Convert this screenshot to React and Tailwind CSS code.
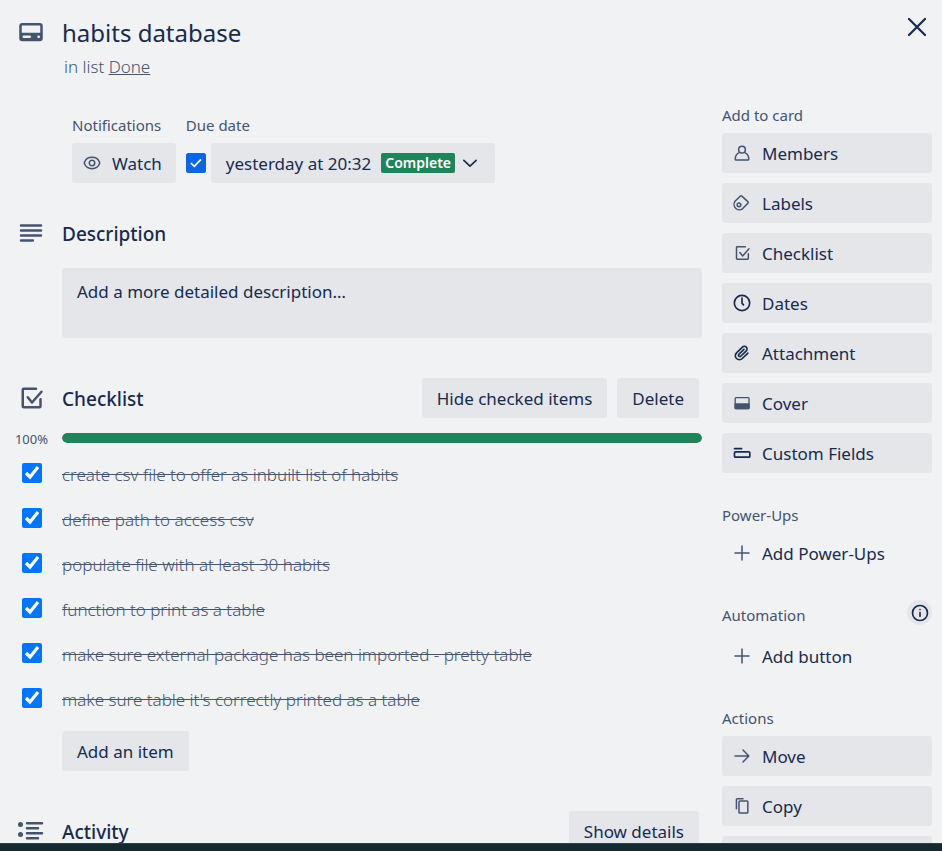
import React, { useState } from "react";

function Icon({ size = "size-5", sw = 2, children, className = "text-[#44546f]" }) {
  return (
    <svg
      viewBox="0 0 24 24"
      className={`${size} ${className} shrink-0`}
      fill="none"
      stroke="currentColor"
      strokeWidth={sw}
      strokeLinecap="round"
      strokeLinejoin="round"
      aria-hidden="true"
    >
      {children}
    </svg>
  );
}

const DARK = "text-[#172b4d]";

const checklistShape = (
  <>
    <path d="M16 4.6H6.2a.8.8 0 0 0-.8.8v13.2c0 .4.4.8.8.8h12.6c.4 0 .8-.4.8-.8V13" />
    <path d="M9.4 11.4l3.4 4.2L20.4 7" />
  </>
);

const icons = {
  members: (
    <Icon sw={1.8}>
      <circle cx="12" cy="8" r="4" />
      <path d="M9.2 11.2C6 12.4 3.9 15.6 3.9 19.5c0 .6.4 1 1 1h14.2c.6 0 1-.4 1-1 0-3.9-2.1-7.1-5.3-8.3" />
    </Icon>
  ),
  labels: (
    <Icon sw={1.8}>
      <path d="M3.9 9.7L9.8 3.8a1.4 1.4 0 0 1 2 0L19 10.4a1.2 1.2 0 0 1 0 1.8L12.9 18.7A6.4 6.4 0 0 1 3.9 9.7z" />
      <circle cx="8.4" cy="14.2" r="2.2" />
    </Icon>
  ),
  checklist: <Icon sw={1.8}>{checklistShape}</Icon>,
  dates: (
    <Icon className={DARK}>
      <circle cx="12" cy="12" r="9.2" />
      <path d="M12 6.2V12.2l1.8 2" />
    </Icon>
  ),
  attachment: (
    <Icon className={DARK} sw={0}>
      <path
        fill="currentColor"
        d="M11.6426 17.9647C10.1123 19.46 7.62736 19.4606 6.10092 17.9691C4.57505 16.478 4.57769 14.0467 6.10253 12.5566L13.2505 5.57184C14.1476 4.6952 15.5861 4.69251 16.4832 5.56921C17.3763 6.44184 17.3778 7.85135 16.4869 8.72199L9.78361 15.2722C9.53288 15.5172 9.12807 15.5163 8.86954 15.2636C8.61073 15.0107 8.60963 14.6158 8.86954 14.3618L15.0989 8.27463C15.4812 7.90109 15.4812 7.29546 15.0989 6.92192C14.7167 6.54838 14.0969 6.54838 13.7146 6.92192L7.48523 13.0091C6.45911 14.0118 6.46356 15.618 7.48523 16.6163C8.50674 17.6145 10.1511 17.6186 11.1679 16.6249L17.8712 10.0747C19.5274 8.45632 19.5244 5.83555 17.8676 4.2165C16.2047 2.59156 13.5266 2.59657 11.8662 4.21913L4.71822 11.2039C2.42951 13.4404 2.42555 17.083 4.71661 19.3218C7.00774 21.5606 10.7323 21.5597 13.0269 19.3174L19.7133 12.7837C20.0956 12.4101 20.0956 11.8045 19.7133 11.431C19.331 11.0574 18.7113 11.0574 18.329 11.431L11.6426 17.9647Z"
      />
    </Icon>
  ),
  cover: (
    <Icon sw={1.6}>
      <rect x="3.8" y="5.6" width="16.6" height="13" rx="1" />
      <path fill="currentColor" d="M3.8 13.2h16.6v4.4a1 1 0 0 1-1 1H4.8a1 1 0 0 1-1-1z" />
    </Icon>
  ),
  fields: (
    <Icon className={DARK}>
      <path d="M3 6.8h8.5" />
      <rect x="3" y="10.6" width="18.4" height="6.4" rx="1.2" />
    </Icon>
  ),
  plus: (
    <Icon sw={1.8}>
      <path d="M12 3.6v16.8M3.6 12h16.8" />
    </Icon>
  ),
  move: (
    <Icon sw={1.8}>
      <path d="M3.6 12h16.4M13.2 4.8l7 7.2-7 7.2" />
    </Icon>
  ),
  copy: (
    <Icon sw={1.8}>
      <rect x="8.4" y="6" width="10.6" height="14.4" rx="1" />
      <path d="M5.3 15.4V4.4c0-.7.5-1.2 1.2-1.2H13.2" />
    </Icon>
  ),
};

function GrayButton({ children }) {
  return (
    <button
      type="button"
      className="h-10 rounded-[3px] bg-[#e4e6ea] px-[15px] pt-0.5 text-[17px] leading-5 text-[#172b4d]"
    >
      {children}
    </button>
  );
}

function SideButton({ icon, label, plain }) {
  return (
    <button
      type="button"
      className={`flex h-10 w-full items-center gap-2.5 rounded-[3px] px-2.5 text-left text-[17px] leading-5 text-[#172b4d] ${
        plain ? "" : "bg-[#e4e6ea]"
      }`}
    >
      {icons[icon]}
      <span className="pt-0.5">{label}</span>
    </button>
  );
}

function SideSection({ title, extra, children }) {
  return (
    <section>
      <div
        className={`flex min-h-[25px] items-end justify-between ${extra ? "mb-[11px]" : "mb-2"}`}
      >
        <h3 className="text-[15px] leading-5 text-[#44546f]">{title}</h3>
        {extra}
      </div>
      <div className="flex flex-col gap-2.5">{children}</div>
    </section>
  );
}

function SectionHead({ icon, title, children }) {
  return (
    <div className="flex min-h-10 items-center">
      <div className="flex w-[62px] shrink-0 justify-center">{icon}</div>
      <h2 className="flex-1 pt-0.5 text-[19px] leading-6 font-medium text-[#172b4d]">{title}</h2>
      <div className="flex gap-2.5 pr-[3px]">{children}</div>
    </div>
  );
}

const initialItems = [
  "create csv file to offer as inbuilt list of habits",
  "define path to access csv",
  "populate file with at least 30 habits",
  "function to print as a table",
  "make sure external package has been imported - pretty table",
  "make sure table it's correctly printed as a table",
].map((text) => ({ text, done: true }));

export default function App() {
  const [items, setItems] = useState(initialItems);
  const [due, setDue] = useState(true);
  const percent = Math.round((items.filter((i) => i.done).length / items.length) * 100);
  const toggle = (index) =>
    setItems(items.map((item, i) => (i === index ? { ...item, done: !item.done } : item)));

  return (
    <div className="flex h-screen flex-col overflow-hidden bg-[#152a30] font-['Noto_Sans',sans-serif]">
      <div className="min-h-0 flex-1 overflow-hidden bg-[#f1f2f4]">
        <header className="flex items-start pt-3 pr-2.5">
          <div className="flex w-[62px] shrink-0 justify-center pt-[5px]">
            <Icon size="size-[30px]">
              <rect x="3.6" y="5.8" width="16.8" height="12.6" rx="1.4" />
              <path
                d="M3.6 12.6h16.8v4.6a1.2 1.2 0 0 1-1.2 1.2H4.8a1.2 1.2 0 0 1-1.2-1.2z"
                fill="currentColor"
                stroke="none"
              />
              <path d="M6.2 15.8h4.8M18 15.8h.2" stroke="#f1f2f4" strokeWidth="2" />
            </Icon>
          </div>
          <div className="flex-1 pt-[5px]">
            <h1 className="text-[24px] leading-8 text-[#172b4d]">habits database</h1>
            <p className="mt-2 pl-0.5 text-[17px] leading-5 font-light text-[#44546f]">
              in list{" "}
              <a href="#done" className="underline">
                Done
              </a>
            </p>
          </div>
          <button type="button" aria-label="Close" className="grid size-[30px] place-items-center">
            <Icon size="size-[30px]" className={DARK} sw={1.8}>
              <path d="M5.6 5.6l12.8 12.8M18.4 5.6L5.6 18.4" />
            </Icon>
          </button>
        </header>

        <div className="flex gap-5 pr-2.5">
          <main className="min-w-0 flex-1 pt-[38px]">
            <div className="flex gap-2.5 pl-[72px]">
              <div>
                <h3 className="mb-2 text-[15px] leading-5 text-[#44546f]">Notifications</h3>
                <button
                  type="button"
                  className="flex h-10 items-center gap-2.5 rounded-[3px] bg-[#e4e6ea] pr-3.5 pl-2.5 text-[17px] leading-5 text-[#172b4d]"
                >
                  <Icon sw={1.8}>
                    <path d="M12 5.2c4.6 0 7.8 2.7 9 5.8.3.7.3 1.3 0 2-1.2 3.1-4.4 5.8-9 5.8s-7.8-2.7-9-5.8c-.3-.7-.3-1.3 0-2 1.2-3.1 4.4-5.8 9-5.8z" />
                    <circle cx="12" cy="12" r="3.3" />
                  </Icon>
                  <span className="pt-0.5">Watch</span>
                </button>
              </div>
              <div>
                <h3 className="mb-2 text-[15px] leading-5 text-[#44546f]">Due date</h3>
                <div className="flex items-center gap-[5px]">
                  <label className="grid size-5 place-items-center">
                    <input
                      type="checkbox"
                      aria-label="Mark due date complete"
                      checked={due}
                      onChange={() => setDue(!due)}
                      className="col-start-1 row-start-1 size-5 appearance-none rounded-[2px] border border-[#0c66e4] bg-white checked:bg-[#0c66e4]"
                    />
                    <Icon
                      size="size-5"
                      className="pointer-events-none col-start-1 row-start-1 text-white"
                    >
                      <path d="M5.8 12l4.2 4L18 7.6" strokeLinecap="butt" />
                    </Icon>
                  </label>
                  <button
                    type="button"
                    className="flex h-10 items-center rounded-[3px] bg-[#e4e6ea] px-[15px] text-[17px] leading-5 text-[#172b4d]"
                  >
                    <span className="pt-0.5">yesterday at 20:32</span>
                    <span className="ml-2.5 rounded-[2px] bg-[#1f845a] px-1 text-[14px] leading-5 font-semibold text-white">
                      Complete
                    </span>
                    <Icon size="ml-[5px] size-5" className={DARK}>
                      <path d="M4.6 8.8L12 15.8l7.4-7" />
                    </Icon>
                  </button>
                </div>
              </div>
            </div>

            <section className="mt-[30px]">
              <SectionHead
                title="Description"
                icon={
                  <Icon size="size-[30px]">
                    <path d="M4 6h16M4 10h16M4 14h16M4 18h9.5" />
                  </Icon>
                }
              />
              <div className="mt-[15px] pl-[62px]">
                <button
                  type="button"
                  className="flex h-[70px] w-full items-start rounded-[3px] bg-[#e4e6ea] px-[15px] py-3.5 text-left text-[17px] leading-5 text-[#172b4d]"
                >
                  Add a more detailed description…
                </button>
              </div>
            </section>

            <section className="mt-10">
              <SectionHead
                title="Checklist"
                icon={<Icon size="size-[30px]">{checklistShape}</Icon>}
              >
                <GrayButton>Hide checked items</GrayButton>
                <GrayButton>Delete</GrayButton>
              </SectionHead>
              <div className="mt-2.5 flex h-5 items-center">
                <span className="w-[62px] pt-0.5 pr-[14px] text-right text-[13px] leading-5 text-[#44546f]">
                  {percent}%
                </span>
                <div className="h-2.5 flex-1 overflow-hidden rounded-full bg-[#e4e6ea]">
                  <div className="h-full rounded-full bg-[#1f845a]" style={{ width: `${percent}%` }} />
                </div>
              </div>
              <ul className="pt-[5px]">
                {items.map((item, index) => (
                  <li key={item.text} className="h-[45px]">
                    <label className="flex items-start">
                      <span className="flex w-[62px] shrink-0 pt-2.5 pl-[22px]">
                        <input
                          type="checkbox"
                          checked={item.done}
                          onChange={() => toggle(index)}
                          className="size-5"
                        />
                      </span>
                      <span
                        className={`pt-3 text-[17px] leading-5 font-light text-[#44546f] ${
                          item.done ? "line-through" : ""
                        }`}
                      >
                        {item.text}
                      </span>
                    </label>
                  </li>
                ))}
              </ul>
              <div className="mt-2 pl-[62px]">
                <GrayButton>Add an item</GrayButton>
              </div>
            </section>

            <section className="mt-10">
              <SectionHead
                title="Activity"
                icon={
                  <Icon size="size-[30px]">
                    <path d="M8.8 5.8h12M8.8 9.8h8.8M8.8 13.8h12M8.8 17.8h8.8" />
                    <circle cx="3.6" cy="6.8" r="2" fill="currentColor" stroke="none" />
                    <circle cx="3.6" cy="14.8" r="2" fill="currentColor" stroke="none" />
                  </Icon>
                }
              >
                <GrayButton>Show details</GrayButton>
              </SectionHead>
            </section>
          </main>

          <aside className="flex w-[210px] shrink-0 flex-col gap-[27px] pt-[23px]">
            <SideSection title="Add to card">
              <SideButton icon="members" label="Members" />
              <SideButton icon="labels" label="Labels" />
              <SideButton icon="checklist" label="Checklist" />
              <SideButton icon="dates" label="Dates" />
              <SideButton icon="attachment" label="Attachment" />
              <SideButton icon="cover" label="Cover" />
              <SideButton icon="fields" label="Custom Fields" />
            </SideSection>
            <SideSection title="Power-Ups">
              <SideButton icon="plus" label="Add Power-Ups" plain />
            </SideSection>
            <SideSection
              title="Automation"
              extra={
                <button
                  type="button"
                  aria-label="About automation"
                  className="grid size-[25px] place-items-center rounded-full bg-[#e4e6ea]"
                >
                  <Icon className={DARK}>
                    <circle cx="12" cy="12" r="9" />
                    <path d="M12 11.4v4.6M12 8v.1" />
                  </Icon>
                </button>
              }
            >
              <SideButton icon="plus" label="Add button" plain />
            </SideSection>
            <SideSection title="Actions">
              <SideButton icon="move" label="Move" />
              <SideButton icon="copy" label="Copy" />
              <SideButton />
            </SideSection>
          </aside>
        </div>
      </div>
      <div className="h-2 shrink-0 border-t border-[#2f4146]" />
    </div>
  );
}
